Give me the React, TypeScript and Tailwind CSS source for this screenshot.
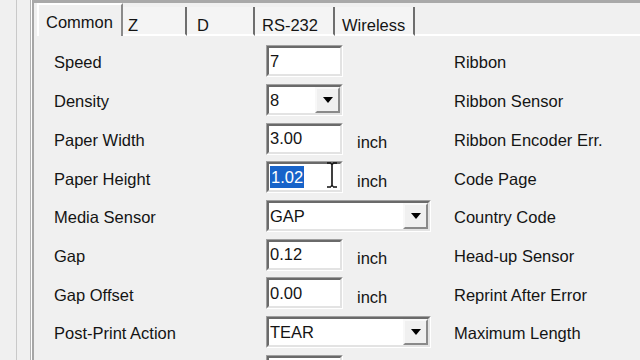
import React from 'react';

type Row = {
  label: string;
  kind: 'input' | 'combo' | 'wide' | 'none';
  value?: string;
  inch?: boolean;
  selected?: boolean;
  right: string;
};

const ROWS: Row[] = [
  { label: 'Speed', kind: 'input', value: '7', right: 'Ribbon' },
  { label: 'Density', kind: 'combo', value: '8', right: 'Ribbon Sensor' },
  { label: 'Paper Width', kind: 'input', value: '3.00', inch: true, right: 'Ribbon Encoder Err.' },
  { label: 'Paper Height', kind: 'input', value: '1.02', inch: true, selected: true, right: 'Code Page' },
  { label: 'Media Sensor', kind: 'wide', value: 'GAP', right: 'Country Code' },
  { label: 'Gap', kind: 'input', value: '0.12', inch: true, right: 'Head-up Sensor' },
  { label: 'Gap Offset', kind: 'input', value: '0.00', inch: true, right: 'Reprint After Error' },
  { label: 'Post-Print Action', kind: 'wide', value: 'TEAR', right: 'Maximum Length' },
  { label: '', kind: 'input', value: '', right: '' },
];

const TABS = [
  { name: 'Z', w: 'w-[64px]', pl: 'pl-[5px]' },
  { name: 'D', w: 'w-[68px]', pl: 'pl-[10px]' },
  { name: 'RS-232', w: 'w-[80px]', pl: 'pl-[7px]' },
  { name: 'Wireless', w: 'w-[80px]', pl: 'pl-[7px]' },
];

const Sunken: React.FC<{ className: string; children?: React.ReactNode }> = ({ className, children }) => (
  <div className={`${className} h-[32px] border border-t-[#a0a0a0] border-l-[#a0a0a0] border-b-white border-r-white`}>
    <div className="h-full border-2 border-t-[#6a6a6a] border-l-[#6a6a6a] border-b-[#e3e3e3] border-r-[#e3e3e3] bg-white flex items-center relative">
      {children}
    </div>
  </div>
);

const DropButton: React.FC = () => (
  <div className="ml-auto h-full w-[25px] bg-[#f0f0f0] border-2 border-t-[#f8f8f8] border-l-[#f8f8f8] border-b-[#8a8a8a] border-r-[#8a8a8a] flex items-center justify-center">
    <svg width="10" height="6" viewBox="0 0 10 6">
      <path d="M0 0 H10 L5 6 Z" fill="#000" />
    </svg>
  </div>
);

const Control: React.FC<{ row: Row }> = ({ row }) => {
  if (row.kind === 'input') {
    return (
      <Sunken className="w-[77px]">
        {row.selected ? (
          <span className="ml-[1px] px-[1px] bg-[#1763c9] text-white leading-[22px]">{row.value}</span>
        ) : (
          <span className="ml-[1px]">{row.value}</span>
        )}
        {row.selected && (
          <svg className="absolute left-[57px] top-[-2px]" width="12" height="26" viewBox="0 0 12 26">
            <path d="M1 1 H5 M7 1 H11 M6 2 V24 M1 25 H5 M7 25 H11 M5 1.5 L6 2.5 L7 1.5 M5 24.5 L6 23.5 L7 24.5" stroke="#111" strokeWidth="1.6" fill="none" />
          </svg>
        )}
      </Sunken>
    );
  }
  if (row.kind === 'combo' || row.kind === 'wide') {
    return (
      <Sunken className={row.kind === 'wide' ? 'w-[165px]' : 'w-[77px]'}>
        <span className="ml-[1px]">{row.value}</span>
        <DropButton />
      </Sunken>
    );
  }
  return null;
};

export default function App() {
  return (
    <div className="w-[640px] h-[360px] overflow-hidden bg-[#f0f0f0] flex text-[16.5px] text-[#141414] font-['Liberation_Sans',Arial,sans-serif]">
      <div className="w-[16px] shrink-0" />
      <div className="w-[1px] shrink-0 bg-[#c9c9c9]" />
      <div className="w-[13px] shrink-0" />
      <div className="w-[1px] shrink-0 bg-[#b4b4b4]" />
      <div className="w-[1px] shrink-0 bg-white" />
      <div className="flex-1 flex flex-col border-l-2 border-t-[3px] border-l-[#a6a6a6] border-t-[#a9a9a9]">
        <div className="h-[1px] bg-white" />
        {/* tab strip */}
        <div className="h-[36px] flex items-end pl-[3px]">
          <div className="w-[86px] h-[33px] bg-[#f0f0f0] border-t-2 border-l-2 border-r-2 border-t-white border-l-white border-r-[#8a8a8a] pl-[7px] pt-[8px] leading-[18px] text-[16.5px]">
            Common
          </div>
          {TABS.map((t) => (
            <div
              key={t.name}
              className={`${t.w} ${t.pl} h-[29px] bg-[#f4f4f4] border-r-2 border-r-[#6e6e6e] border-b-2 border-b-white pt-[9px] leading-[18px] text-[16.5px]`}
            >
              {t.name}
            </div>
          ))}
          <div className="flex-1 h-[2px] bg-white" />
        </div>
        {/* page */}
        <div className="flex flex-col pl-[20px] pt-[6px]">
          {ROWS.map((r, i) => (
            <div key={i} className="h-[38.7px] shrink-0 flex items-center">
              <div className="w-[212px] shrink-0 pt-[3px]">{r.label}</div>
              <div className="w-[188px] shrink-0 flex items-center">
                <Control row={r} />
                {r.inch && <span className="ml-[14px] mt-[8px]">inch</span>}
              </div>
              <div className="whitespace-nowrap pt-[3px]">{r.right}</div>
            </div>
          ))}
        </div>
      </div>
    </div>
  );
}
